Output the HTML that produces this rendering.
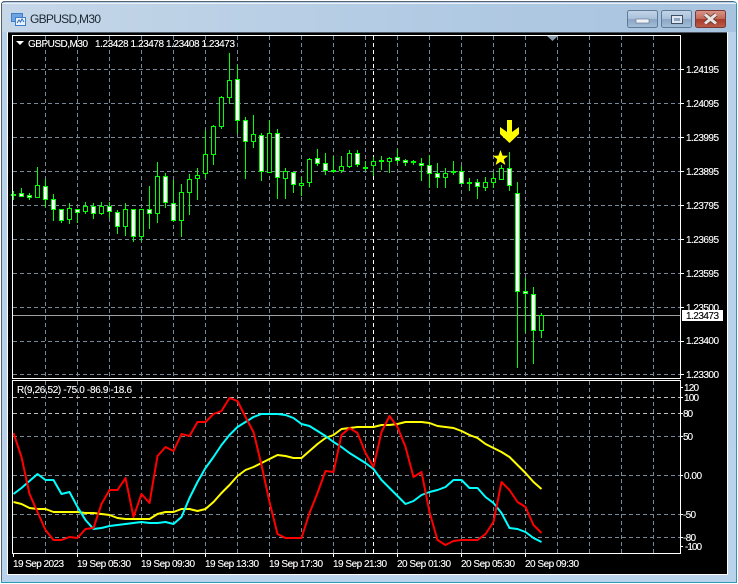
<!DOCTYPE html>
<html><head><meta charset="utf-8"><style>
html,body{margin:0;padding:0;background:#fff}
svg{display:block}
text{font-family:"Liberation Sans",sans-serif;font-size:10px;fill:#fff;stroke:#fff;stroke-width:.12}
.g{stroke:#778899;stroke-width:1;stroke-dasharray:4 3;fill:none}
.w{stroke:#0f0;stroke-width:1;fill:none}
.h{fill:#000;stroke:#0f0;stroke-width:1}
.f{fill:#fff;stroke:#0f0;stroke-width:1}
.l{fill:none;stroke-width:2;stroke-linejoin:round}
</style></head><body>
<svg width="738" height="584" viewBox="0 0 738 584" xmlns="http://www.w3.org/2000/svg">
<defs>
<linearGradient id="tb" x1="0" y1="0" x2="1" y2="0"><stop offset="0" stop-color="#c6d7e8"/><stop offset=".5" stop-color="#b4cce4"/><stop offset="1" stop-color="#a8c3df"/></linearGradient>
<linearGradient id="fr" x1="0" y1="0" x2="0" y2="1"><stop offset="0" stop-color="#b9d1ea"/><stop offset="1" stop-color="#b9d3ec"/></linearGradient>
<linearGradient id="bt" x1="0" y1="0" x2="0" y2="1"><stop offset="0" stop-color="#c3d5e8"/><stop offset=".48" stop-color="#a9c1da"/><stop offset=".52" stop-color="#8aa6c4"/><stop offset="1" stop-color="#a5bfd9"/></linearGradient>
<linearGradient id="cl" x1="0" y1="0" x2="0" y2="1"><stop offset="0" stop-color="#d9968a"/><stop offset=".48" stop-color="#c26a5a"/><stop offset=".52" stop-color="#a83a2a"/><stop offset="1" stop-color="#bd5c4a"/></linearGradient>
</defs>
<rect width="738" height="584" fill="#fff"/>
<path d="M1 583V5Q1 1 5 1H733Q737 1 737 5V583Z" fill="#2f98b0"/>
<path d="M2 582V5Q2 2 5 2H733Q736 2 736 5V582Z" fill="url(#fr)"/>
<rect x="2" y="3" width="734" height="29" fill="url(#tb)"/>
<path d="M1.500 580V5Q1.500 1.500 5 1.500H733" fill="none" stroke="#56636f" stroke-width="1"/>
<rect x="2" y="3" width="734" height="1" fill="#e8eff6"/>
<!-- icon -->
<rect x="11.500" y="13.500" width="11" height="8" fill="#6fa4e0" stroke="#3f7ec8"/>
<rect x="15.500" y="17.500" width="10" height="8" fill="#eaf3fd" stroke="#3f7ec8"/>
<path d="M17 23l2-3 1.500 2 1.500-3 2 3" fill="none" stroke="#2f6cb8"/>
<text x="30" y="23" style="font-size:12px;fill:#1c2833;stroke:none" textLength="71" lengthAdjust="spacing">GBPUSD,M30</text>
<!-- buttons -->
<rect x="627.500" y="10.500" width="30" height="17" rx="2" fill="url(#bt)" stroke="#5f7a97"/>
<rect x="636" y="19" width="13" height="4" fill="#eef3f8" stroke="#5b6f85" stroke-width=".6"/>
<rect x="661.500" y="10.500" width="30" height="17" rx="2" fill="url(#bt)" stroke="#5f7a97"/>
<rect x="671.500" y="15.500" width="11" height="8" fill="#dfe8f1" stroke="#3f5064"/>
<rect x="674" y="18" width="6" height="3" fill="#8aa4bf"/>
<rect x="695.500" y="10.500" width="30" height="17" rx="2" fill="url(#cl)" stroke="#7a3a35"/>
<path d="M705 14.500l11 9M716 14.500l-11 9" stroke="#5a3a36" stroke-width="4.500" fill="none"/>
<path d="M705 14.500l11 9M716 14.500l-11 9" stroke="#e9e4e2" stroke-width="3" fill="none"/>
<!-- client -->
<rect x="8" y="32" width="719" height="542" fill="#000"/>
<path d="M7.500 32V574.500H727.500V32" fill="none" stroke="#fff"/>
<rect x="8" y="32" width="719" height="1" fill="#4a5560"/>
<!-- grid main -->
<path class="g" d="M45.500 36V378M77.500 36V378M109.500 36V378M141.500 36V378M173.500 36V378M205.500 36V378M237.500 36V378M269.500 36V378M301.500 36V378M333.500 36V378M365.500 36V378M397.500 36V378M429.500 36V378M461.500 36V378M493.500 36V378M525.500 36V378M557.500 36V378M589.500 36V378M621.500 36V378M653.500 36V378"/>
<path class="g" d="M13 69.500H680M13 103.500H680M13 137.500H680M13 171.500H680M13 205.500H680M13 239.500H680M13 273.500H680M13 307.500H680M13 341.500H680M13 374.500H680"/>
<path class="g" style="stroke:#fff" d="M373.500 36V378M373.500 381V553"/>
<!-- grid sub -->
<path class="g" d="M45.500 381V553M77.500 381V553M109.500 381V553M141.500 381V553M173.500 381V553M205.500 381V553M237.500 381V553M269.500 381V553M301.500 381V553M333.500 381V553M365.500 381V553M397.500 381V553M429.500 381V553M461.500 381V553M493.500 381V553M525.500 381V553M557.500 381V553M589.500 381V553M621.500 381V553M653.500 381V553"/>
<path class="g" style="stroke:#c0c0c0" d="M13 397.500H680M13 413.500H680"/>
<path class="g" d="M13 436.500H680M13 475.500H680M13 514.500H680M13 537.500H680"/>
<!-- current price -->
<path d="M13 315.500H680" stroke="#a0a0a0" stroke-width="1"/>
<!-- wicks -->
<path class="w" d="M13.500 191V200M21.500 188V196M29.500 193V200M37.500 167V198M45.500 179V207M53.500 194V221M61.500 209V223M69.500 203V224M77.500 209V223M85.500 202V214M93.500 203V219M101.500 202V215M109.500 202V218M117.500 210V234M125.500 203V236M133.500 209V242M141.500 209V241M149.500 186V229M157.500 162V223M165.500 173V208M173.500 180V222M181.500 184V237M189.500 174V215M197.500 168V200M205.500 130V178M213.500 125V165M221.500 96V129M229.500 53V104M237.500 65V134M245.500 117V179M253.500 115V148M261.500 133V181M269.500 120V173M277.500 129V199M285.500 168V199M293.500 172V193M301.500 177V196M309.500 158V187M317.500 149V166M325.500 153V175M333.500 156V173M341.500 156V173M349.500 150V168M357.500 150V167M365.500 161V171M373.500 157V176M381.500 156V170M389.500 157V173M397.500 149V164M405.500 159V166M413.500 160V165M421.500 158V181M429.500 155V188M437.500 163V188M445.500 168V188M453.500 161V175M461.500 166V184M469.500 178V191M477.500 179V199M485.500 177V191M493.500 173V188M501.500 165V180M509.500 152V191M517.500 182V368M525.500 278V333M533.500 287V364M541.500 313V338"/>
<!-- bodies -->
<g>
<rect class="h" x="11.500" y="194.500" width="4" height="1"/>
<rect class="f" x="19.500" y="193.500" width="4" height="3"/>
<rect class="f" x="27.500" y="195.500" width="4" height="2"/>
<rect class="h" x="35.500" y="185.500" width="4" height="12"/>
<rect class="f" x="43.500" y="186.500" width="4" height="13"/>
<rect class="f" x="51.500" y="199.500" width="4" height="10"/>
<rect class="f" x="59.500" y="209.500" width="4" height="11"/>
<rect class="h" x="67.500" y="208.500" width="4" height="11"/>
<rect class="f" x="75.500" y="209.500" width="4" height="3"/>
<rect class="h" x="83.500" y="206.500" width="4" height="5"/>
<rect class="f" x="91.500" y="206.500" width="4" height="7"/>
<rect class="h" x="99.500" y="206.500" width="4" height="7"/>
<rect class="f" x="107.500" y="206.500" width="4" height="5"/>
<rect class="f" x="115.500" y="212.500" width="4" height="14"/>
<rect class="h" x="123.500" y="209.500" width="4" height="17"/>
<rect class="f" x="131.500" y="209.500" width="4" height="27"/>
<rect class="h" x="139.500" y="209.500" width="4" height="27"/>
<rect class="f" x="147.500" y="209.500" width="4" height="4"/>
<rect class="h" x="155.500" y="176.500" width="4" height="37"/>
<rect class="f" x="163.500" y="176.500" width="4" height="26"/>
<rect class="f" x="171.500" y="203.500" width="4" height="17"/>
<rect class="h" x="179.500" y="192.500" width="4" height="28"/>
<rect class="h" x="187.500" y="179.500" width="4" height="13"/>
<rect class="h" x="195.500" y="175.500" width="4" height="3"/>
<rect class="h" x="203.500" y="154.500" width="4" height="19"/>
<rect class="h" x="211.500" y="126.500" width="4" height="28"/>
<rect class="h" x="219.500" y="97.500" width="4" height="29"/>
<rect class="h" x="227.500" y="80.500" width="4" height="17"/>
<rect class="f" x="235.500" y="79.500" width="4" height="41"/>
<rect class="f" x="243.500" y="120.500" width="4" height="21"/>
<rect class="h" x="251.500" y="134.500" width="4" height="7"/>
<rect class="f" x="259.500" y="135.500" width="4" height="36"/>
<rect class="h" x="267.500" y="133.500" width="4" height="39"/>
<rect class="f" x="275.500" y="133.500" width="4" height="44"/>
<rect class="h" x="283.500" y="171.500" width="4" height="7"/>
<rect class="f" x="291.500" y="172.500" width="4" height="12"/>
<rect class="h" x="299.500" y="183.500" width="4" height="2"/>
<rect class="h" x="307.500" y="159.500" width="4" height="23"/>
<rect class="f" x="315.500" y="158.500" width="4" height="5"/>
<rect class="f" x="323.500" y="163.500" width="4" height="7"/>
<rect class="h" x="331.500" y="170.500" width="4" height="1"/>
<rect class="h" x="339.500" y="166.500" width="4" height="4"/>
<rect class="h" x="347.500" y="153.500" width="4" height="13"/>
<rect class="f" x="355.500" y="153.500" width="4" height="11"/>
<rect class="h" x="363.500" y="167.500" width="4" height="1"/>
<rect class="h" x="371.500" y="161.500" width="4" height="4"/>
<rect class="h" x="379.500" y="160.500" width="4" height="1"/>
<rect class="h" x="387.500" y="158.500" width="4" height="3"/>
<rect class="f" x="395.500" y="157.500" width="4" height="3"/>
<rect class="f" x="403.500" y="160.500" width="4" height="2"/>
<rect class="h" x="411.500" y="161.500" width="4" height="1"/>
<rect class="f" x="419.500" y="163.500" width="4" height="2"/>
<rect class="f" x="427.500" y="165.500" width="4" height="8"/>
<rect class="f" x="435.500" y="173.500" width="4" height="4"/>
<rect class="h" x="443.500" y="173.500" width="4" height="4"/>
<rect class="h" x="451.500" y="171.500" width="4" height="1"/>
<rect class="f" x="459.500" y="171.500" width="4" height="12"/>
<rect class="h" x="467.500" y="182.500" width="4" height="1"/>
<rect class="f" x="475.500" y="182.500" width="4" height="4"/>
<rect class="h" x="483.500" y="182.500" width="4" height="5"/>
<rect class="h" x="491.500" y="178.500" width="4" height="4"/>
<rect class="h" x="499.500" y="168.500" width="4" height="11"/>
<rect class="f" x="507.500" y="168.500" width="4" height="17"/>
<rect class="f" x="515.500" y="193.500" width="4" height="98"/>
<rect class="f" x="523.500" y="291.500" width="4" height="2"/>
<rect class="f" x="531.500" y="294.500" width="4" height="36"/>
<rect class="h" x="539.500" y="315.500" width="4" height="15"/>
</g>
<!-- objects -->
<path d="M507 120H512V132L519 127V134L509.500 143L500 134V127L507 132Z" fill="#ff0"/>
<path d="M500.500 150L502.600 155.600L508.200 155.800L503.800 159.300L505.400 165L500.500 161.700L495.600 165L497.200 159.300L492.800 155.800L498.400 155.600Z" fill="#ff0"/>
<!-- sub lines -->
<polyline class="l" stroke="#ff0" points="13.500,502 21.500,504 29.500,508 37.500,509 45.500,509 53.500,512 61.500,512 69.500,512 77.500,512 85.500,513 93.500,513 101.500,514 109.500,515 117.500,518 125.500,519 133.500,519 141.500,519 149.500,519 157.500,514 165.500,512 173.500,512 181.500,509 189.500,509 197.500,511 205.500,509 213.500,502 221.500,493 229.500,485 237.500,476 245.500,470 253.500,467 261.500,463 269.500,459 277.500,455 285.500,456 293.500,458 301.500,458 309.500,451 317.500,444 325.500,438 333.500,435 341.500,429 349.500,428 357.500,427 365.500,427 373.500,427 381.500,425 389.500,425 397.500,424 405.500,422 413.500,422 421.500,422 429.500,423 437.500,426 445.500,427 453.500,428 461.500,431 469.500,435 477.500,438 485.500,444 493.500,448 501.500,452 509.500,457 517.500,465 525.500,473 533.500,482 541.500,489"/>
<polyline class="l" stroke="#0ff" points="13.500,494 21.500,488 29.500,481 37.500,474 45.500,480 53.500,480 61.500,494 69.500,492 77.500,507 85.500,520 93.500,529 101.500,528 109.500,526 117.500,525 125.500,524 133.500,523 141.500,522 149.500,523 157.500,523 165.500,522 173.500,524 181.500,517 189.500,498 197.500,482 205.500,468 213.500,457 221.500,445 229.500,435 237.500,427 245.500,422 253.500,417 261.500,414 269.500,414 277.500,414 285.500,415 293.500,418 301.500,424 309.500,426 317.500,431 325.500,436 333.500,442 341.500,447 349.500,453 357.500,458 365.500,463 373.500,469 381.500,480 389.500,488 397.500,496 405.500,504 413.500,501 421.500,495 429.500,492 437.500,490 445.500,487 453.500,480 461.500,480 469.500,488 477.500,488 485.500,497 493.500,503 501.500,513 509.500,528 517.500,529 525.500,532 533.500,538 541.500,542"/>
<polyline class="l" stroke="#f00" points="13.500,433 21.500,457 29.500,494 37.500,512 45.500,530 53.500,540 61.500,540 69.500,537 77.500,538 85.500,529 93.500,528 101.500,504 109.500,490 117.500,490 125.500,478 133.500,517 141.500,494 149.500,503 157.500,456 165.500,447 173.500,451 181.500,434 189.500,436 197.500,422 205.500,422 213.500,414 221.500,411 229.500,398 237.500,401 245.500,417 253.500,432 261.500,465 269.500,502 277.500,534 285.500,538 293.500,538 301.500,538 309.500,513 317.500,493 325.500,471 333.500,472 341.500,435 349.500,428 357.500,433 365.500,453 373.500,467 381.500,432 389.500,416 397.500,427 405.500,447 413.500,477 421.500,472 429.500,512 437.500,540 445.500,545 453.500,541 461.500,540 469.500,540 477.500,540 485.500,534 493.500,522 501.500,482 509.500,490 517.500,502 525.500,507 533.500,525 541.500,533"/>
<!-- frames -->
<path d="M12.500 378.500V35.500H680.500V378.500Z" fill="none" stroke="#fff"/>
<path d="M12.500 553.500V380.500H680.500V553.500Z" fill="none" stroke="#fff"/>
<path d="M547 36H558L552.500 41Z" fill="#8b9bab"/>
<path d="M681 69.500h3M681 103.500h3M681 137.500h3M681 171.500h3M681 205.500h3M681 239.500h3M681 273.500h3M681 307.500h3M681 341.500h3M681 374.500h3M681 387.500h2M681 397.500h2M681 413.500h2M681 436.500h2M681 475.500h2M681 514.500h2M681 537.500h2M681 546.500h2M13.500 554v3M77.500 554v3M141.500 554v3M205.500 554v3M269.500 554v3M333.500 554v3M397.500 554v3M461.500 554v3M525.500 554v3" stroke="#fff" fill="none"/>
<!-- legend -->
<path d="M16 41H24L20 45Z" fill="#fff"/>
<text x="28" y="47" textLength="60" lengthAdjust="spacing">GBPUSD,M30</text>
<text x="95" y="47" textLength="140" lengthAdjust="spacing">1.23428 1.23478 1.23408 1.23473</text>
<text x="17" y="393" textLength="115" lengthAdjust="spacing">R(9,26,52) -75.0 -86.9 -18.6</text>
<!-- price axis -->
<g>
<text x="686" y="73" textLength="33">1.24195</text>
<text x="686" y="107" textLength="33">1.24095</text>
<text x="686" y="141" textLength="33">1.23995</text>
<text x="686" y="175" textLength="33">1.23895</text>
<text x="686" y="209" textLength="33">1.23795</text>
<text x="686" y="243" textLength="33">1.23695</text>
<text x="686" y="277" textLength="33">1.23595</text>
<text x="686" y="311" textLength="33">1.23500</text>
<text x="686" y="344" textLength="33">1.23400</text>
<text x="686" y="378" textLength="33">1.23300</text>
<rect x="682" y="310" width="41" height="11" fill="#fff"/>
<text x="686" y="319" textLength="33" style="fill:#000;stroke:#000">1.23473</text>
<text x="684" y="391" textLength="15">120</text>
<text x="684" y="401" textLength="15">100</text>
<text x="683" y="417" textLength="10">80</text>
<text x="683" y="440" textLength="10">50</text>
<text x="684" y="479" textLength="18">0.00</text>
<text x="683" y="518" textLength="13">-50</text>
<text x="683" y="541" textLength="13">-80</text>
<text x="685" y="550" textLength="17">-100</text>
</g>
<!-- time axis -->
<g>
<text x="13" y="567" textLength="51">19 Sep 2023</text>
<text x="77" y="567" textLength="54">19 Sep 05:30</text>
<text x="141" y="567" textLength="54">19 Sep 09:30</text>
<text x="205" y="567" textLength="54">19 Sep 13:30</text>
<text x="269" y="567" textLength="54">19 Sep 17:30</text>
<text x="333" y="567" textLength="54">19 Sep 21:30</text>
<text x="397" y="567" textLength="54">20 Sep 01:30</text>
<text x="461" y="567" textLength="54">20 Sep 05:30</text>
<text x="525" y="567" textLength="54">20 Sep 09:30</text>
</g>
</svg>
</body></html>
